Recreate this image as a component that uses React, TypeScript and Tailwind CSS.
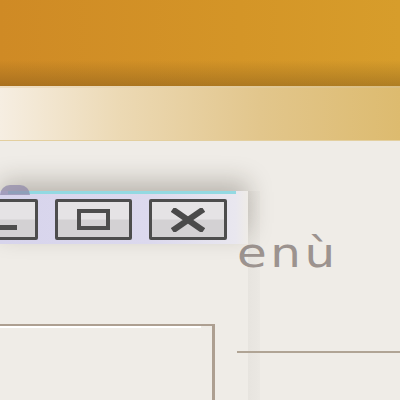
const WinButton = ({ className, children }: { className: string; children?: React.ReactNode }) => (
  <div
    className={`relative shrink-0 h-[41px] border-[3px] border-[#4d4d4d] rounded-[2px] bg-[linear-gradient(#e5e3e5_0%,#e5e3e5_48%,#d3d1d3_52%,#d3d1d3_100%)] flex items-center justify-center ${className}`}
  >
    {children}
  </div>
);

export default function App() {
  return (
    <div className="w-[400px] h-[400px] overflow-hidden bg-[#efece7] flex flex-col font-['DejaVu_Sans',sans-serif]">
      {/* top panel */}
      <div className="h-[86px] shrink-0 flex flex-col justify-end bg-[linear-gradient(90deg,#cf8a25,#d49527_60%,#d79d2b)]">
        <div className="h-[26px] bg-[linear-gradient(rgba(90,60,20,0),rgba(90,60,20,0.32))]" />
      </div>
      <div className="h-[2px] shrink-0 bg-[linear-gradient(90deg,#efe0c8,#d9bd80)]" />
      {/* menu band */}
      <div className="h-[53px] shrink-0 bg-[linear-gradient(90deg,#f6eee2,#ecd9b4_30%,#e2c68c_65%,#ddbb6f)] border-b border-[#e3cf9f]" />

      {/* desktop */}
      <div className="relative flex-1 flex">
        <div className="w-[248px] shrink-0 pt-[183px]">
          <div className="-ml-[4px] w-[219px] h-[100px] border-t-2 border-r-[3px] border-[#ad9f91]">
            <div className="h-[2px] w-[205px] bg-white" />
          </div>
        </div>
        <div className="w-[12px] shrink-0 mt-[50px] bg-[linear-gradient(90deg,#e7e4df,#ebe8e3)]" />
        <div className="flex-1 flex flex-col pt-[92px] -ml-[23px]">
          <div className="text-[41px] leading-none text-[#9c938f] tracking-[3px] origin-left scale-x-[1.18]">enù</div>
          <div className="mt-[77px] h-[2px] bg-[#b0a495]" />
        </div>

        {/* window titlebar */}
        <div className="absolute left-0 top-[50px] w-[248px] h-[53px] pt-[8px] flex gap-[17px] bg-[linear-gradient(90deg,#d7d4ec,#dcd9ee_60%,#e9e7ef_95%,#efece7)] shadow-[0_-10px_24px_rgba(40,30,20,0.26)]">
          <div className="absolute left-[8px] top-0 w-[228px] h-[3px] bg-[#93d9e2]" />
          <div className="absolute left-0 -top-[6px] w-[30px] h-[10px] rounded-t-full bg-[#8d86a8] opacity-70" />
          <WinButton className="-ml-[40px] w-[78px]">
            <div className="absolute left-[36px] top-[23px] w-[18px] h-[5px] bg-[#4d4d4d]" />
          </WinButton>
          <WinButton className="w-[77px]">
            <div className="w-[33px] h-[21px] border-[4px] border-[#4d4d4d]" />
          </WinButton>
          <WinButton className="w-[78px]">
            <svg width="34" height="24" viewBox="0 0 34 24">
              <path d="M4 3 L30 21 M30 3 L4 21" stroke="#4a4a4a" strokeWidth="6" strokeLinecap="square" />
            </svg>
          </WinButton>
        </div>
      </div>
    </div>
  );
}
